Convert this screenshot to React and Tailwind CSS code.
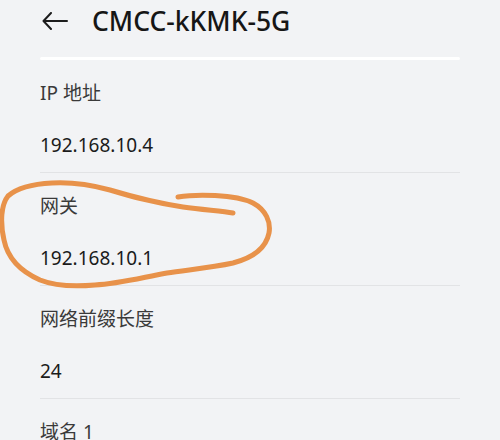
import React from 'react';

const rows = [
    { label: 'IP 地址', value: '192.168.10.4' },
    { label: '网关', value: '192.168.10.1' },
    { label: '网络前缀长度', value: '24' },
    { label: '域名 1', value: '' },
];

function Row({ label, value, last }) {
    return (
        <div className={last ? '' : 'border-b border-[#e2e3e5]'}>
            <div className="pt-[21px] text-[19px] leading-6 text-[#3a3a3a]">{label}</div>
            {value && (
                <div className="mt-[28px] pb-[15px] text-[19px] leading-6 text-[#1b1b1b]">{value}</div>
            )}
        </div>
    );
}

export default function App() {
    return (
        <div
            className="relative h-[440px] w-[500px] overflow-hidden bg-[#f2f3f5]"
            style={{ fontFamily: '"Noto Sans", "Noto Sans CJK SC", sans-serif' }}
        >
            <div className="flex h-[42px] items-center px-[42px]">
                <svg width="26" height="18" viewBox="0 0 26 18" fill="none" stroke="#1c1c1c" strokeWidth="2" strokeLinecap="round" strokeLinejoin="round">
                    <path d="M25 9H2" />
                    <path d="M9 1L1.5 9L9 17" />
                </svg>
                <h1 className="ml-[24px] text-[26.5px] font-medium leading-8 text-[#161616]">CMCC-kKMK-5G</h1>
            </div>

            <div className="mx-[40px] mt-[15px] h-[3px] rounded-full bg-white" />

            <div className="px-[40px]">
                {rows.map((r, i) => (
                    <Row key={r.label} label={r.label} value={r.value} last={i === rows.length - 1} />
                ))}
            </div>

            {/* hand-drawn highlight */}
            <svg className="pointer-events-none absolute left-0 top-0" width="500" height="440" fill="none">
                <path
                    d="M178 197 C195 194 235 194 253 203 C266 210 271 222 269 233 C266 248 252 258 233 263 C210 268 185 270 167 273 C140 278 118 284 95 285 C72 287 55 286 40 280 C22 272 8 260 4 240 C0 222 1 205 8 196 C16 189 32 184 52 183 C70 182 88 184 110 190 C130 196 150 202 183 207 C205 210 222 211 233 213"
                    stroke="#e8924a"
                    strokeWidth="5"
                    strokeLinecap="round"
                    strokeLinejoin="round"
                />
            </svg>
        </div>
    );
}
